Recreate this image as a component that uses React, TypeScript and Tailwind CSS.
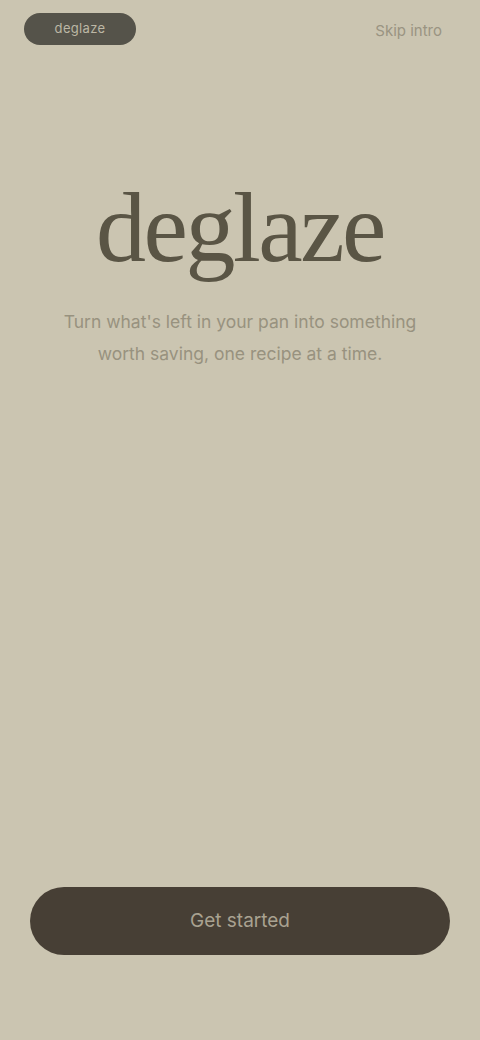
import { type FC } from 'react';

const App: FC = () => {
  return (
    <div
      className="w-[480px] h-[1040px] bg-[#cbc5b1] flex flex-col text-[#3a3629]"
      style={{ fontFamily: '"Liberation Serif", serif' }}
    >
      {/* Top bar */}
      <div className="flex items-center justify-between pl-6 pr-[38px] pt-[12px] h-[46px]">
        <div className="h-[32px] w-[112px] rounded-full bg-[#55534a] flex items-center justify-center">
          <span className="text-[13px] text-[#bcb7a5] tracking-wide" style={{ fontFamily: '"Inter", sans-serif' }}>
            deglaze
          </span>
        </div>
        <span
          className="text-[15px] text-[#9a9482] pt-1"
          style={{ fontFamily: '"Inter", sans-serif' }}
        >
          Skip intro
        </span>
      </div>

      {/* Hero */}
      <div className="flex flex-col items-center mt-[132px]">
        <h1 className="text-[100px] leading-none tracking-tight text-[#5a5545]">deglaze</h1>
        <p
          className="mt-[28px] text-[17.5px] leading-[32px] text-[#98927f] text-center px-8"
          style={{ fontFamily: '"Inter", sans-serif' }}
        >
          Turn what's left in your pan into something
          <br />
          worth saving, one recipe at a time.
        </p>
      </div>

      <div className="flex-1" />

      {/* CTA */}
      <div className="px-[30px] pb-[85px]">
        <button
          className="w-full h-[68px] rounded-full bg-[#473f35] text-[#a9a291] text-[19px]"
          style={{ fontFamily: '"Inter", sans-serif' }}
        >
          Get started
        </button>
      </div>
    </div>
  );
};

export default App;
